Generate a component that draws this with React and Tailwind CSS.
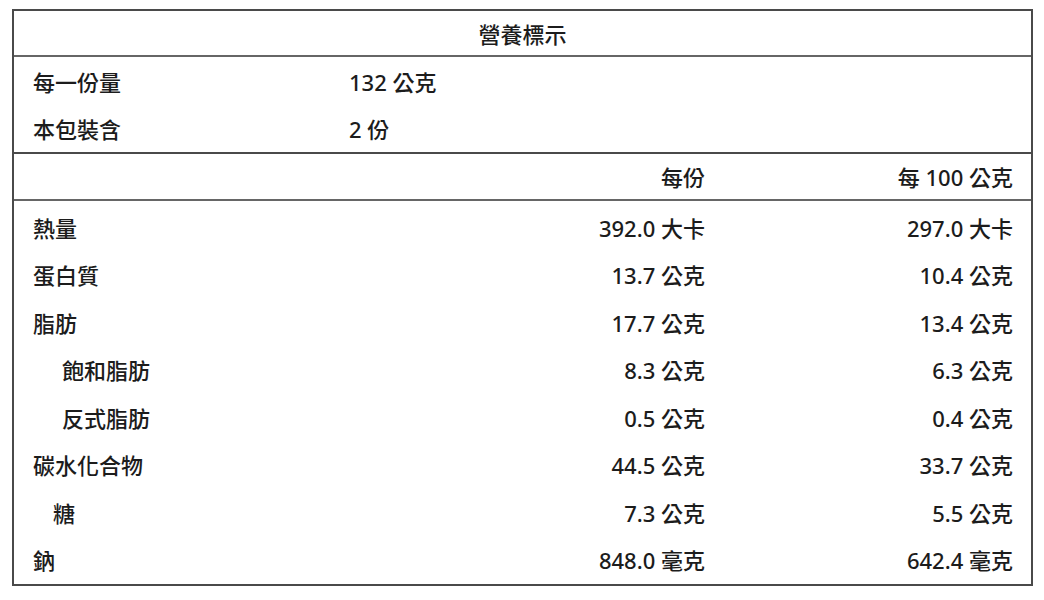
import React from 'react';

const rows = [
  { label: '熱量', per: '392.0 大卡', per100: '297.0 大卡', indent: 0 },
  { label: '蛋白質', per: '13.7 公克', per100: '10.4 公克', indent: 0 },
  { label: '脂肪', per: '17.7 公克', per100: '13.4 公克', indent: 0 },
  { label: '飽和脂肪', per: '8.3 公克', per100: '6.3 公克', indent: 2 },
  { label: '反式脂肪', per: '0.5 公克', per100: '0.4 公克', indent: 2 },
  { label: '碳水化合物', per: '44.5 公克', per100: '33.7 公克', indent: 0 },
  { label: '糖', per: '7.3 公克', per100: '5.5 公克', indent: 1 },
  { label: '鈉', per: '848.0 毫克', per100: '642.4 毫克', indent: 0 },
];

function Row({ label, per, per100, indent, height = 'h-[47.5px]' }) {
  const pad = indent === 2 ? 'pl-[48px]' : indent === 1 ? 'pl-[39px]' : 'pl-[19px]';
  return (
    <div className={`flex items-center ${height}`}>
      <div className={`flex-1 ${pad}`}>{label}</div>
      <div className="w-[300px] text-right">{per}</div>
      <div className="w-[326px] pr-[18px] text-right">{per100}</div>
    </div>
  );
}

export default function App() {
  return (
    <div className="min-h-[600px] bg-white pt-[9px] pl-[12px]">
      <div
        className="w-[1021px] border-2 border-[#4a4a4a] text-[22px] font-medium leading-none text-[#1c1c1c]"
        style={{ fontFamily: '"Noto Sans", "Noto Sans CJK TC", sans-serif' }}
      >
        {/* title */}
        <div className="flex h-[46px] items-center justify-center border-b-2 border-[#666] pt-[1px]">
          營養標示
        </div>

        {/* serving info */}
        <div className="border-b-2 border-[#4a4a4a] pt-[1px]">
          {[
            ['每一份量', '132 公克'],
            ['本包裝含', '2 份'],
          ].map(([k, v]) => (
            <div key={k} className="flex h-[47px] items-center pl-[19px]">
              <div className="w-[316px]">{k}</div>
              <div>{v}</div>
            </div>
          ))}
        </div>

        {/* header */}
        <div className="flex h-[47px] items-center border-b-2 border-[#666] pt-[1px]">
          <div className="flex-1" />
          <div className="w-[300px] text-right">每份</div>
          <div className="w-[326px] pr-[18px] text-right">每 100 公克</div>
        </div>

        {/* nutrients */}
        <div className="pt-[3px]">
          {rows.map((r) => (
            <Row key={r.label} {...r} />
          ))}
        </div>
      </div>
    </div>
  );
}
